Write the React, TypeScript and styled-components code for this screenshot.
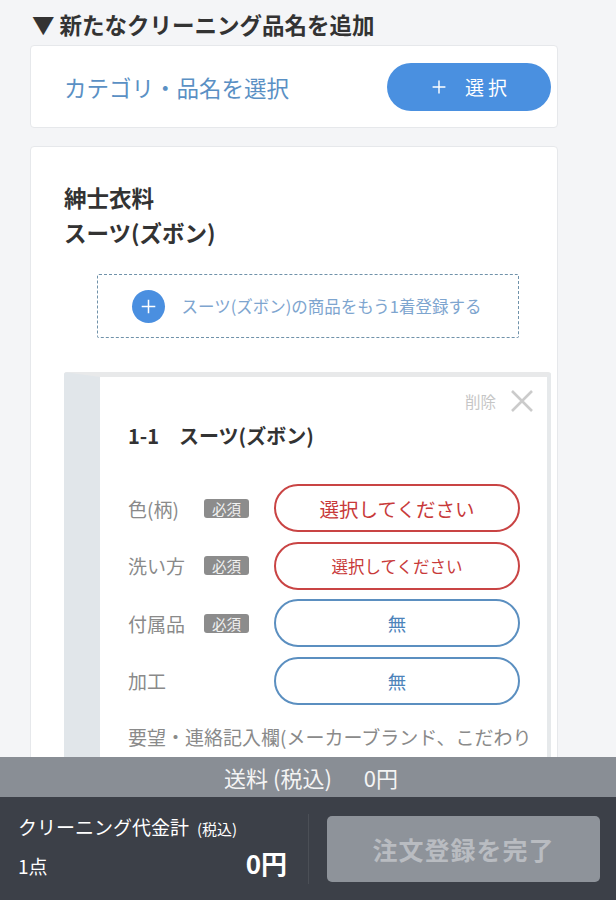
import React from "react";
import styled, { createGlobalStyle } from "styled-components";

const Global = createGlobalStyle`
  html, body { margin: 0; padding: 0; overflow: hidden; }
  body {
    background: #f4f5f7;
    font-family: "Noto Sans CJK JP", "Noto Sans", sans-serif;
    color: #333;
  }
`;

const Page = styled.div`
  width: 558px;
  padding: 8px 0 0 30px;
  height: 900px;
  box-sizing: border-box;
`;

const SectionTitle = styled.h2`
  margin: 0 0 0 2px;
  font-size: 22.5px;
  line-height: 32px;
  font-weight: 700;
  color: #333;
  white-space: pre;
`;

const Card = styled.div`
  background: #fff;
  border: 1px solid #e6e8eb;
  border-radius: 4px;
  box-sizing: border-box;
  padding: 0 6px 0 33px;
`;

const PickCard = styled(Card)`
  margin-top: 5px;
  height: 83px;
  display: flex;
  align-items: center;
  justify-content: space-between;
`;

const PickLabel = styled.span`
  font-size: 22.5px;
  color: #5a90c4;
`;

const PickButton = styled.button`
  width: 164px;
  height: 48px;
  border: none;
  border-radius: 24px;
  background: #4a90e0;
  color: #fff;
  font-family: inherit;
  font-size: 19px;
  letter-spacing: 4px;
  display: flex;
  align-items: center;
  justify-content: center;
  gap: 18px;
  padding: 0 0 0 4px;
`;

const ItemCard = styled(Card)`
  margin-top: 18px;
  padding-top: 33px;
  padding-bottom: 40px;
`;

const Category = styled.div`
  font-size: 22.5px;
  line-height: 35px;
  font-weight: 700;
  color: #333;
`;

const AddBox = styled.div`
  margin: 24px auto 0;
  width: 422px;
  height: 64px;
  box-sizing: border-box;
  border: 1.5px dashed #7092aa;
  border-radius: 2px;
  display: flex;
  align-items: center;
  padding-left: 34px;
  gap: 17px;
`;

const PlusCircle = styled.span`
  width: 33px;
  height: 33px;
  border-radius: 50%;
  background: #4a8fe0;
  display: flex;
  align-items: center;
  justify-content: center;
`;

const AddText = styled.span`
  font-size: 16.5px;
  color: #7ea5cf;
`;

const ItemFrame = styled.div`
  margin-top: 34px;
  border-style: solid;
  border-color: #e8e9ea #e6e9eb #e6e9eb #e1e6ea;
  border-width: 5px 4px 0 36px;
  border-radius: 3px 3px 0 0;
  background: #fff;
  padding: 12px 27px 40px 28px;
`;

const DeleteRow = styled.div`
  display: flex;
  justify-content: flex-end;
  align-items: center;
  gap: 14px;
  margin-right: -14px;
  height: 24px;
`;

const DeleteText = styled.span`
  font-size: 15.5px;
  color: #c6c6c6;
`;

const ItemTitle = styled.div`
  margin-top: 10px;
  font-size: 20px;
  line-height: 26px;
  font-weight: 700;
  color: #333;
  white-space: pre;
`;

const Fields = styled.div`
  margin-top: 35px;
  display: flex;
  flex-direction: column;
  gap: 9.5px;
`;

const FieldRow = styled.div`
  display: flex;
  align-items: center;
  height: 48px;
`;

const FieldLabel = styled.span`
  width: 76px;
  font-size: 19px;
  color: #8a8a8a;
  white-space: nowrap;
`;

const Required = styled.span<{ $hidden?: boolean }>`
  width: 45px;
  height: 19px;
  border-radius: 3px;
  background: ${(p) => (p.$hidden ? "transparent" : "#8c8c8c")};
  color: #f2f2f2;
  font-size: 14.5px;
  line-height: 19px;
  text-align: center;
  margin-right: 25px;
  flex-shrink: 0;
`;

const SelectButton = styled.button<{ $error?: boolean; $size: number }>`
  flex: 1;
  height: 48px;
  border-radius: 24px;
  background: #fff;
  border: 2px solid ${(p) => (p.$error ? "#c94444" : "#5b8fc0")};
  color: ${(p) => (p.$error ? "#c83a3a" : "#4d83ba")};
  font-family: inherit;
  font-size: ${(p) => p.$size}px;
  padding: 0;
`;

const Note = styled.div`
  margin-top: 17px;
  margin-right: -20px;
  font-size: 19px;
  line-height: 30px;
  color: #8a8a8a;
`;

const Footer = styled.footer`
  position: fixed;
  left: 0;
  right: 0;
  bottom: 0;
`;

const ShippingBar = styled.div`
  height: 40px;
  background: #898e95;
  color: #f4f4f4;
  font-size: 22px;
  line-height: 40px;
  text-align: center;
  white-space: pre;
  padding-left: 6px;
`;

const TotalBar = styled.div`
  height: 103px;
  background: #3c4048;
  display: flex;
  align-items: center;
  padding: 0 16px 0 18px;
  box-sizing: border-box;
`;

const TotalBlock = styled.div`
  width: 269px;
  color: #fff;
`;

const TotalLabel = styled.div`
  font-size: 19px;
  line-height: 26px;
  white-space: nowrap;
`;

const TaxNote = styled.span`
  font-size: 15px;
  margin-left: 8px;
`;

const TotalRow = styled.div`
  display: flex;
  justify-content: space-between;
  align-items: baseline;
  margin-top: 4px;
  line-height: 34px;
`;

const Count = styled.span`
  font-size: 19px;
`;

const Amount = styled.span`
  font-size: 26px;
  font-weight: 700;
`;

const Divider = styled.div`
  width: 1px;
  height: 70px;
  background: #4b4f56;
  margin: 0 18px 0 21px;
`;

const SubmitButton = styled.button`
  flex: 1;
  height: 66px;
  border: none;
  border-radius: 5px;
  background: #8e939a;
  color: #b9bcc1;
  font-family: inherit;
  font-size: 25px;
  font-weight: 700;
  letter-spacing: 1px;
`;

const PlusIcon = ({ size, stroke }: { size: number; stroke: number }) => (
  <svg width={size} height={size} viewBox="0 0 20 20">
    <path d="M10 2v16M2 10h16" stroke="#fff" strokeWidth={stroke} />
  </svg>
);

const CloseIcon = () => (
  <svg width="24" height="24" viewBox="0 0 24 24">
    <path d="M2 2L22 22M22 2L2 22" stroke="#cbcbcb" strokeWidth="2.6" />
  </svg>
);

const fields = [
  { label: "色(柄)", required: true, value: "選択してください", error: true, size: 19.5 },
  { label: "洗い方", required: true, value: "選択してください", error: true, size: 16.5 },
  { label: "付属品", required: true, value: "無", error: false, size: 18.5 },
  { label: "加工", required: false, value: "無", error: false, size: 18.5 },
];

export default function App() {
  return (
    <>
      <Global />
      <Page>
        <SectionTitle>{"▼ 新たなクリーニング品名を追加"}</SectionTitle>
        <PickCard>
          <PickLabel>カテゴリ・品名を選択</PickLabel>
          <PickButton>
            <PlusIcon size={16} stroke={1.8} />
            <span>選択</span>
          </PickButton>
        </PickCard>
        <ItemCard>
          <Category>紳士衣料</Category>
          <Category>スーツ(ズボン)</Category>
          <AddBox>
            <PlusCircle>
              <PlusIcon size={17} stroke={1.8} />
            </PlusCircle>
            <AddText>スーツ(ズボン)の商品をもう1着登録する</AddText>
          </AddBox>
          <ItemFrame>
            <DeleteRow>
              <DeleteText>削除</DeleteText>
              <CloseIcon />
            </DeleteRow>
            <ItemTitle>{"1-1　スーツ(ズボン)"}</ItemTitle>
            <Fields>
              {fields.map((f) => (
                <FieldRow key={f.label}>
                  <FieldLabel>{f.label}</FieldLabel>
                  <Required $hidden={!f.required}>{f.required ? "必須" : ""}</Required>
                  <SelectButton $error={f.error} $size={f.size}>
                    {f.value}
                  </SelectButton>
                </FieldRow>
              ))}
            </Fields>
            <Note>要望・連絡記入欄(メーカーブランド、こだわり等)</Note>
          </ItemFrame>
        </ItemCard>
      </Page>
      <Footer>
        <ShippingBar>{"送料 (税込)　  0円"}</ShippingBar>
        <TotalBar>
          <TotalBlock>
            <TotalLabel>
              クリーニング代金計<TaxNote>(税込)</TaxNote>
            </TotalLabel>
            <TotalRow>
              <Count>1点</Count>
              <Amount>0円</Amount>
            </TotalRow>
          </TotalBlock>
          <Divider />
          <SubmitButton>注文登録を完了</SubmitButton>
        </TotalBar>
      </Footer>
    </>
  );
}
